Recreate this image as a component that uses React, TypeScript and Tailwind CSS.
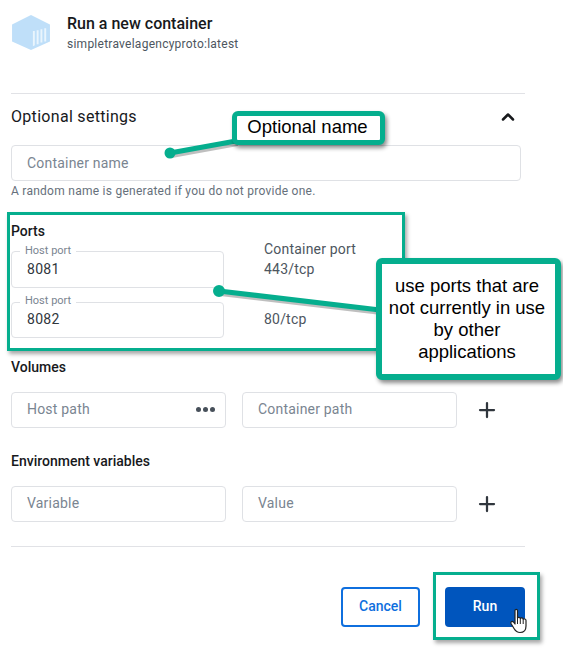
import { ChevronUp, Plus } from "lucide-react";

function Field({ text, className }: { text: string; className: string }) {
  return (
    <div className={`flex h-[36px] items-center rounded-[4px] border border-[#dfe1e5] pl-[15px] text-[14px] tracking-[0.2px] text-[#7a8591] ${className}`}>
      {text}
    </div>
  );
}

function HostPort({ value, compact, className }: { value: string; compact?: boolean; className: string }) {
  return (
    <div className={`relative w-[213px] rounded-[4px] border border-[#dfe1e5] pl-[15px] ${className}`}>
      <span className={`absolute left-[8px] bg-white px-[5px] text-[11px] leading-[14px] text-[#7a8591] ${compact ? "top-[-9px]" : "top-[-8px]"}`}>
        Host port
      </span>
      <div className={`text-[14px] leading-[20px] tracking-[0.3px] text-[#30363d] ${compact ? "pt-[6px]" : "pt-[7px]"}`}>{value}</div>
    </div>
  );
}

function Whale() {
  return (
    <svg width="40" height="36" viewBox="0 0 42 38" className="mt-[15px]">
      <path d="M21 0 L41 10 V28 L21 37 L1 28 V10 Z" fill="#bfdff9" />
      <path d="M23 17 h2 v15 l-2 1 Z M27 16 h2 v15 h-2 Z M31 15 h2 v14 h-2 Z M35 14 h2 v14 h-2 Z" fill="#eaf5fd" />
    </svg>
  );
}

function Hand() {
  return (
    <svg width="20" height="26" viewBox="0 0 20 26" className="absolute top-[608px] left-[509px]">
      <path
        d="M6 2.5 C6 1 8.5 1 8.5 2.5 V10 C9 9 11 9 11.3 10.5 C12 9.5 14 9.7 14.2 11.2 C15 10.5 17 10.8 17 12.5 V18 C17 22 15 24.5 11 24.5 C7.5 24.5 6.5 23 5 20.5 L2 15.5 C1.2 14 3 12.6 4.4 14 L6 16 Z"
        fill="#fff"
        stroke="#222"
        strokeWidth="1.2"
        strokeLinejoin="round"
      />
      <path d="M8.5 10 V16 M11.3 10.5 V16 M14.2 11.2 V16" stroke="#222" strokeWidth="1" fill="none" />
    </svg>
  );
}

export default function App() {
  return (
    <div className="relative h-[648px] w-[563px] overflow-hidden bg-white font-['Roboto',sans-serif]">
      <div className="w-[525px] pl-[11px]">
        {/* header */}
        <div className="flex h-[94px] gap-[16px] border-b border-[#e1e2e6]">
          <Whale />
          <div className="pt-[14px]">
            <div className="text-[16px] leading-[20px] font-medium text-[#17191c]">Run a new container</div>
            <div className="text-[12px] leading-[20px] tracking-[0.25px] text-[#4d5660]">simpletravelagencyproto:latest</div>
          </div>
        </div>

        <div className="mb-[7px] flex h-[44px] items-center justify-between pt-[2px] pr-[7px]">
          <span className="text-[16px] tracking-[0.3px] text-[#17191c]">Optional settings</span>
          <ChevronUp size={20} strokeWidth={3} className="text-[#17191c]" />
        </div>
        <Field text="Container name" className="w-[510px]" />
        <div className="mt-[2px] text-[12px] leading-[17px] tracking-[0.26px] text-[#66707b]">
          A random name is generated if you do not provide one.
        </div>

        {/* ports */}
        <div className="mt-[22px] text-[14px] leading-[18px] font-medium text-[#17191c]">Ports</div>
        <div className="mt-[11px] grid grid-cols-[253px_1fr]">
          <HostPort value="8081" className="h-[37px]" />
          <div className="mt-[-12px] text-[14px] leading-[20px] tracking-[0.2px] text-[#4d5660]">
            <div>Container port</div>
            <div>443/tcp</div>
          </div>
          <HostPort value="8082" compact className="mt-[14px] h-[36px]" />
          <div className="mt-[21px] text-[14px] leading-[20px] tracking-[0.2px] text-[#4d5660]">80/tcp</div>
        </div>

        {/* volumes */}
        <div className="mt-[20px] text-[14px] leading-[18px] font-medium text-[#17191c]">Volumes</div>
        <div className="mt-[16px] flex items-center gap-[16px]">
          <div className="relative">
            <Field text="Host path" className="w-[215px] pb-[1px]" />
            <div className="absolute top-[15px] right-[11px] flex gap-[2px]">
              <span className="size-[5px] rounded-full bg-[#47505a]" />
              <span className="size-[5px] rounded-full bg-[#47505a]" />
              <span className="size-[5px] rounded-full bg-[#47505a]" />
            </div>
          </div>
          <Field text="Container path" className="w-[215px] pb-[1px]" />
          <Plus size={24} strokeWidth={2.25} className="ml-[2px] text-[#30363d]" />
        </div>

        <div className="mt-[24px] text-[14px] leading-[18px] font-medium text-[#17191c]">Environment variables</div>
        <div className="mt-[16px] flex items-center gap-[16px]">
          <Field text="Variable" className="w-[215px] pb-[1px]" />
          <Field text="Value" className="w-[215px] pb-[1px]" />
          <Plus size={24} strokeWidth={2.25} className="ml-[2px] text-[#30363d]" />
        </div>

        <div className="mt-[24px] border-t border-[#e1e2e6]" />

        {/* actions */}
        <div className="mt-[40px] flex justify-end gap-[25px]">
          <button className="h-[40px] w-[79px] rounded-[4px] border-2 border-[#0f6fde] pb-[2px] text-[14px] font-medium text-[#0f6fde]">Cancel</button>
          <button className="h-[40px] w-[80px] rounded-[4px] bg-[#0055bd] pb-[2px] text-[14px] font-medium text-white">Run</button>
        </div>
      </div>

      {/* screenshot annotations */}
      <div className="absolute top-[212px] left-[7px] h-[139px] w-[398px] border-[3px] border-[#05ae8e] shadow-[2px_3px_4px_rgba(0,0,0,0.35)]" />
      <div className="absolute top-[572px] left-[433px] h-[68px] w-[107px] border-[3px] border-[#05ae8e] shadow-[2px_3px_4px_rgba(0,0,0,0.35)]" />

      <svg width="563" height="648" className="absolute top-0 left-0">
        <g stroke="#000" strokeOpacity="0.25" strokeWidth="5" fill="none" transform="translate(1.5 2.5)">
          <path d="M170 153 L236 141" />
          <path d="M219 291 L380 310" />
        </g>
        <g stroke="#05ae8e" strokeWidth="5" fill="#05ae8e">
          <path d="M170 153 L236 141" />
          <path d="M219 291 L380 310" />
          <circle cx="170" cy="153" r="3" />
          <circle cx="219" cy="291" r="3.5" />
        </g>
      </svg>

      <div className="absolute top-[111px] left-[232px] flex h-[34px] w-[153px] items-center justify-center rounded-[6px] border-[5px] border-[#05ae8e] bg-white pr-[2px] pb-[2px] font-['Liberation_Sans',sans-serif] text-[18.5px] text-black shadow-[2px_3px_4px_rgba(0,0,0,0.45)]">
        Optional name
      </div>
      <div className="absolute top-[258px] left-[376px] flex h-[122px] w-[185px] items-center justify-center rounded-[6px] border-[6px] border-[#05ae8e] bg-white pr-[8px] pl-[5px] text-center font-['Liberation_Sans',sans-serif] text-[18.5px] leading-[22px] text-black shadow-[2px_3px_4px_rgba(0,0,0,0.45)]">
        use ports that are not currently in use by other applications
      </div>

      <Hand />
    </div>
  );
}
